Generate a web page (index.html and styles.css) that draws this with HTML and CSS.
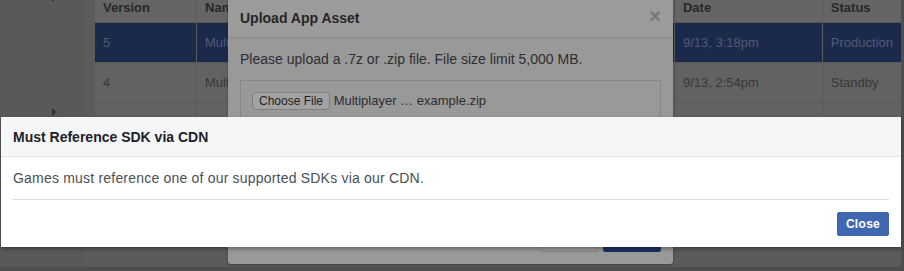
FILE: index.html
```html
<!DOCTYPE html>
<html lang="en">
<head>
  <meta charset="UTF-8">
  <title>Upload App Asset</title>
  <link rel="stylesheet" href="styles.css">
</head>
<body>
  <div class="page">
    <div class="nav">
      <span class="caret"></span>
      <span class="caret"></span>
    </div>
    <div class="panel">
      <table class="versions">
        <colgroup>
          <col class="c-ver"><col class="c-name"><col class="c-date"><col class="c-status">
        </colgroup>
        <thead>
          <tr><th>Version</th><th>Name</th><th>Date</th><th>Status</th></tr>
        </thead>
        <tbody>
          <tr class="selected"><td>5</td><td>Multiplayer example</td><td>9/13, 3:18pm</td><td>Production</td></tr>
          <tr><td>4</td><td>Multiplayer example</td><td>9/13, 2:54pm</td><td>Standby</td></tr>
          <tr><td>3</td><td>Multiplayer example</td><td>9/13, 2:10pm</td><td>Standby</td></tr>
          <tr><td>2</td><td>Multiplayer example</td><td>9/12, 6:02pm</td><td>Standby</td></tr>
        </tbody>
      </table>
    </div>
  </div>

  <!-- upload dialog (behind) -->
  <div class="upload">
    <div class="upload-head">
      <span>Upload App Asset</span>
      <span class="x">&times;</span>
    </div>
    <div class="upload-body">
      <p>Please upload a .7z or .zip file. File size limit 5,000 MB.</p>
      <div class="filebox">
        <span class="choose">Choose File</span>
        <span class="fname">Multiplayer &hellip; example.zip</span>
      </div>
    </div>
    <div class="upload-foot">
      <span class="ubtn"></span>
      <span class="ubtn blue"></span>
    </div>
  </div>

  <!-- error dialog -->
  <div class="dialog">
    <div class="dialog-head">Must Reference SDK via CDN</div>
    <div class="dialog-body">Games must reference one of our supported SDKs via our CDN.</div>
    <div class="dialog-foot">
      <button class="close-btn">Close</button>
    </div>
  </div>
</body>
</html>
```

FILE: styles.css
```css
body {
  margin: 0;
  background: #4e4e4e;
  font-family: "Liberation Sans", Arial, sans-serif;
  overflow: hidden;
  height: 271px;
  position: relative;
}
.page {
  display: flex;
  margin-top: -8px;
  height: 275px;
}
.nav {
  width: 82px;
  background: #595959;
  display: flex;
  flex-direction: column;
  align-items: flex-end;
  padding-right: 25px;
  box-sizing: border-box;
}
/* small right-pointing triangles */
.caret {
  width: 0;
  height: 0;
  border-top: 4px solid transparent;
  border-bottom: 4px solid transparent;
  border-left: 5px solid #333;
  margin-top: 2px;
}
.caret + .caret {
  margin-top: 106px;
}
.panel {
  width: 819px;
  height: 275px;
  background: #5b5b5b;
  border-left: 1px solid #555;
  border-radius: 0 0 4px 4px;
  padding-left: 12px;
  box-sizing: border-box;
}
.versions {
  width: 806px;
  border-collapse: collapse;
  font-size: 13px;
  background: #626262;
}
.c-ver { width: 102px; }
.c-name { width: 483px; }
.c-date { width: 149px; }
.c-status { width: 72px; }
.versions th {
  text-align: left;
  font-weight: bold;
  color: #282828;
  background: #656565;
  height: 30px;
  padding: 0 8px;
  border-left: 1px solid #5a5a5a;
  border-bottom: 1px solid #555;
}
.versions td {
  height: 39px;
  padding: 0 8px;
  color: #383838;
  border-left: 1px solid #5a5a5a;
  border-bottom: 1px solid #5a5a5a;
}
.versions th:first-child,
.versions td:first-child {
  border-left: none;
}
.versions tr.selected td {
  background: #1b2a4b;
  color: #4f5a75;
}

/* upload dialog */
.upload {
  position: absolute;
  left: 228px;
  top: -4px;
  width: 445px;
  height: 268px;
  background: #999;
  border-radius: 0 0 3px 3px;
  box-shadow: 0 1px 3px rgba(0, 0, 0, 0.3);
}
.upload-head {
  height: 42px;
  border-bottom: 1px solid #8b8b8b;
  padding: 0 12px;
  display: flex;
  align-items: center;
  justify-content: space-between;
  font-weight: bold;
  font-size: 14px;
  color: #262626;
  box-sizing: border-box;
  background: #9b9b9b;
}
.upload-head span:first-child {
  margin-top: 2px;
}
.upload-head .x {
  color: #777;
  font-size: 20px;
  font-weight: bold;
}
.upload-body {
  padding: 12px 12px 0;
}
.upload-body p {
  margin: 0 0 12px;
  font-size: 14px;
  line-height: 18px;
  color: #2e2e2e;
}
.filebox {
  border: 1px solid #878787;
  height: 136px;
  padding: 11px;
  box-sizing: border-box;
  font-size: 13px;
  color: #2e2e2e;
}
.choose {
  display: inline-block;
  border: 1px solid #808080;
  border-radius: 4px;
  background: #a3a3a3;
  padding: 1px 6px;
  font-size: 12px;
  color: #222;
}
.upload-foot {
  display: flex;
  justify-content: flex-end;
  gap: 5px;
  padding: 12px 12px 0;
}
.ubtn {
  width: 58px;
  height: 24px;
  border: 1px solid #858585;
  border-radius: 2px;
  box-sizing: border-box;
}
.ubtn.blue {
  background: #1e3160;
  border-color: #1e3160;
}

/* error dialog */
.dialog {
  position: absolute;
  left: 1px;
  top: 117px;
  width: 900px;
  height: 130px;
  background: #fff;
  box-shadow: 0 2px 4px rgba(0, 0, 0, 0.35);
}
.dialog-head {
  height: 40px;
  background: #f5f6f7;
  border-bottom: 1px solid #e5e5e5;
  box-sizing: border-box;
  padding: 0 12px;
  display: flex;
  align-items: center;
  font-size: 14px;
  font-weight: bold;
  color: #1d2129;
}
.dialog-body {
  padding: 12px;
  font-size: 14px;
  line-height: 18px;
  letter-spacing: 0.2px;
  color: #4b4f56;
}
.dialog-foot {
  margin: 0 12px;
  border-top: 1px solid #dadde1;
  padding-top: 12px;
  display: flex;
  justify-content: flex-end;
}
.close-btn {
  width: 52px;
  height: 24px;
  background: #4267b2;
  border: 1px solid #4267b2;
  border-radius: 2px;
  color: #fff;
  font-family: "Liberation Sans", Arial, sans-serif;
  font-weight: bold;
  font-size: 12px;
  letter-spacing: 0.3px;
  padding: 0;
}
```
